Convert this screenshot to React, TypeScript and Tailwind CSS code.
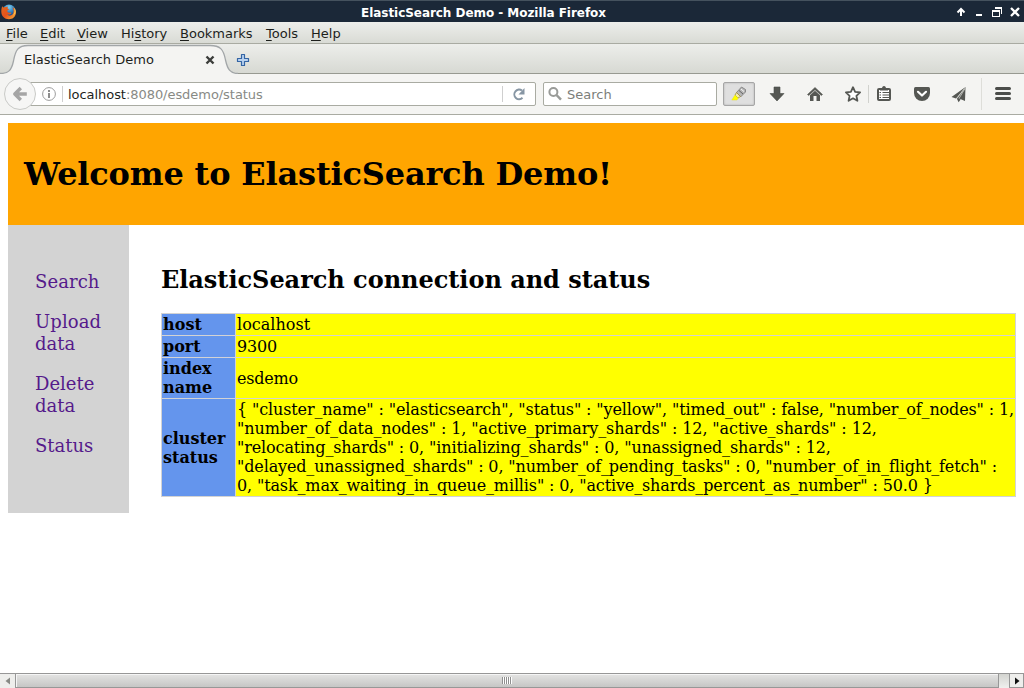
import React from "react";

const menus = [
  { label: "File", key: 0, width: "w-[34px]" },
  { label: "Edit", key: 0, width: "w-[37px]" },
  { label: "View", key: 0, width: "w-[44px]" },
  { label: "History", key: 2, width: "w-[59px]" },
  { label: "Bookmarks", key: 0, width: "w-[86px]" },
  { label: "Tools", key: 0, width: "w-[45px]" },
  { label: "Help", key: 0, width: "w-[40px]" },
];

type Line = { text: string; tracking?: string };

const statusLines: Line[] = [
  { text: '{ "cluster_name" : "elasticsearch", "status" : "yellow", "timed_out" : false, "number_of_nodes" : 1,', tracking: "tracking-[-0.13px]" },
  { text: '"number_of_data_nodes" : 1, "active_primary_shards" : 12, "active_shards" : 12,', tracking: "tracking-[-0.095px]" },
  { text: '"relocating_shards" : 0, "initializing_shards" : 0, "unassigned_shards" : 12,', tracking: "tracking-[-0.13px]" },
  { text: '"delayed_unassigned_shards" : 0, "number_of_pending_tasks" : 0, "number_of_in_flight_fetch" :', tracking: "tracking-[-0.138px]" },
  { text: '0, "task_max_waiting_in_queue_millis" : 0, "active_shards_percent_as_number" : 50.0 }', tracking: "tracking-[-0.137px]" },
];

const rows: { name: Line[]; value: Line[] }[] = [
  { name: [{ text: "host", tracking: "tracking-[0.1px]" }], value: [{ text: "localhost", tracking: "tracking-[0.03px]" }] },
  { name: [{ text: "port" }], value: [{ text: "9300", tracking: "tracking-[-0.18px]" }] },
  { name: [{ text: "index" }, { text: "name" }], value: [{ text: "esdemo", tracking: "tracking-[-0.2px]" }] },
  { name: [{ text: "cluster" }, { text: "status" }], value: statusLines },
];

const links: Line[][] = [
  [{ text: "Search", tracking: "tracking-[0.08px]" }],
  [{ text: "Upload", tracking: "tracking-[0.12px]" }, { text: "data" }],
  [{ text: "Delete" }, { text: "data" }],
  [{ text: "Status" }],
];

function Lines({ lines }: { lines: Line[] }) {
  return (
    <>
      {lines.map(({ text, tracking }) => (
        <span key={text} className={`block whitespace-nowrap ${tracking ?? ""}`}>{text}</span>
      ))}
    </>
  );
}

function FirefoxIcon() {
  return (
    <svg className="ml-px mt-[3px] h-4 w-4 shrink-0 self-start" viewBox="0 0 16 16">
      <defs>
        <radialGradient id="globe" cx=".5" cy=".2" r=".7">
          <stop offset="0" stopColor="#7fd0f0" />
          <stop offset=".6" stopColor="#2a78b8" />
          <stop offset="1" stopColor="#123c78" />
        </radialGradient>
        <linearGradient id="fox" x1="0" y1="0" x2="1" y2="1">
          <stop offset="0" stopColor="#e06a20" />
          <stop offset=".5" stopColor="#e5521c" />
          <stop offset="1" stopColor="#f9b43a" />
        </linearGradient>
      </defs>
      <circle cx="8" cy="7.2" r="6.7" fill="url(#globe)" />
      <path d="M1.2 2.2 2.5 3.5C3.3 3 4.5 2.8 5.5 3.1L6.8 2.4 6.6 4.4 8.2 5.4 6.4 6.6C5.8 8 7.5 9.3 9.4 8.4L10.4 9C9.6 10.6 7.6 11 6.2 10.2 8 12.4 11.5 11.8 12.4 8.8 13 6.6 12.2 4.5 11 3.2 14 4.2 15.4 6.5 14.9 9.5 14.2 13.3 11.3 15.2 8 15.2 3.5 15.2.3 11.8.3 7.7.3 5.7.6 3.7 1.2 2.2Z" fill="url(#fox)" />
      <path d="M12.6 3.4C14 5.4 14 9.5 11.5 11.8 13.8 11.2 15 8.6 14.7 6.7 14.5 5.1 13.5 4 12.6 3.4Z" fill="#fbd04f" />
    </svg>
  );
}

function TitleBar() {
  return (
    <header className="flex h-[22px] border-t border-[#45525e] bg-[#1b2838]">
      <FirefoxIcon />
      <div className="w-[933px] pt-1 text-center text-[12px] font-bold leading-[17px] tracking-[-0.05px] text-white">
        ElasticSearch Demo - Mozilla Firefox
      </div>
      <svg className="-mt-px h-[22px] w-[74px] shrink-0" viewBox="950 0 74 22" fill="none" stroke="#fff" strokeWidth="2">
        <path d="M961 16V9M957.500 12.500 961 9l3.500 3.500" />
        <path d="M976 14h6v2h-6zM992 10h8v7h-8zM993 12v4h6v-4zM995 7h7v7h-1V9h-6z" fill="#fff" fillRule="evenodd" stroke="none" />
        <path d="M1011 8l8 8M1019 8l-8 8" strokeWidth="2.300" />
      </svg>
    </header>
  );
}

function MenuBar() {
  return (
    <nav className="flex h-[22px] border-b border-[#a9aba2] bg-linear-to-b from-[#edeeeb] to-[#d9dbd5] pl-1.5 text-[13px] leading-[23px] text-[#1d1f1c]">
      {menus.map(({ label, key, width }) => (
        <span key={label} className={width}>
          {label.slice(0, key)}
          <span className="underline decoration-1 underline-offset-2">{label[key]}</span>
          {label.slice(key + 1)}
        </span>
      ))}
    </nav>
  );
}

function TabBar() {
  return (
    <div className="flex h-[30px] border-b border-[#979991] bg-linear-to-b from-[#edeeeb] to-[#d7d9d3]">
      <div className="relative h-[30px] w-[238px] shrink-0">
        <svg className="absolute inset-0" width="238" height="30" viewBox="0 0 238 30">
          <path d="M0 29.500C9 29.500 11.500 26 13.500 17 15.500 6 18 1.500 28 1.500H210C220 1.500 223.500 5 225.500 16 227.500 25 230 29.500 238 29.500V30H0Z" fill="#f4f4f2" />
          <path d="M0 29.500C9 29.500 11.500 26 13.500 17 15.500 6 18 1.500 28 1.500H210C220 1.500 223.500 5 225.500 16 227.500 25 230 29.500 238 29.500" fill="none" stroke="#a2a6a8" strokeWidth="1.300" />
        </svg>
        <div className="relative flex items-center pl-6 pt-[6px]">
          <span className="w-[181px] text-[13px] leading-[19px] text-[#1d1f1c]">ElasticSearch Demo</span>
          <svg className="h-2.5 w-2.5" viewBox="0 0 10 10" stroke="#3b3d3b" strokeWidth="2.400">
            <path d="M1.500 1.500l7 7M8.500 1.500l-7 7" />
          </svg>
        </div>
      </div>
      <svg className="ml-[-2px] mt-[9px] h-[14px] w-[14px]" viewBox="0 0 14 14">
        <path d="M5.500 1.500h3v4h4v3h-4v4h-3v-4h-4v-3h4z" fill="#b9d2f0" stroke="#3465a4" strokeWidth="1.200" strokeLinejoin="round" />
      </svg>
    </div>
  );
}

function ToolbarIcons() {
  return (
    <svg className="h-10 w-[269px] shrink-0" viewBox="755 74 269 40" fill="#555753">
      <path d="M774 87h6v6.500h4L777 101l-7-7.500h4z" stroke="#474947" strokeWidth=".6" />
      <path d="M807.500 94.500 815 87.500l7.500 7-1.200 1-6.300-5.800-6.300 5.800z" stroke="#555753" strokeWidth=".6" />
      <path d="M810 95.300 815 90.700l5 4.600v5.700h-3.500v-5h-3v5H810z" />
      <path d="M853 87.200l2.100 4.600 5 .6-3.700 3.400 1 5-4.400-2.500-4.400 2.500 1-5-3.700-3.400 5-.6z" fill="#fff" stroke="#555753" strokeWidth="1.800" strokeLinejoin="round" />
      <path d="M868 85h1v18h-1z" fill="#d1d2ce" />
      <rect x="878" y="89" width="12" height="11" rx="1" fill="#fff" stroke="#555753" strokeWidth="2" />
      <path d="M880 88.500h2c0-1.600.8-2.500 2-2.500s2 .9 2 2.500h2v2h-8z" />
      <path d="M879.500 92.500h1.500M879.500 95h1.500M879.500 97.500h1.500M882.500 92.500h6.500M882.500 95h6.500M882.500 97.500h6.500" stroke="#555753" strokeWidth="1.100" />
      <path d="M915.500 87h13q1.500 0 1.500 1.500v4.500a8 8 0 0 1-16 0v-4.500q0-1.500 1.500-1.500z" />
      <path d="m918 91.800 4 3.700 4-3.700" fill="none" stroke="#fff" strokeWidth="2.200" strokeLinecap="round" strokeLinejoin="round" />
      <path d="M965.500 87 951.500 97l4.500 1.500zM965.500 87 958 98l7 3zM964.500 88.500 956.800 98.500l1.800 3.800 2-2.800-1.600-1z" />
      <path d="M964.500 88.500 957 98.500M965 88.500 959 98.500" stroke="#dcdeda" strokeWidth=".7" />
      <path d="M981 78h1v32h-1z" fill="#deded9" />
      <path d="M996.500 88.500h13M996.500 93.500h13M996.500 98.500h13" stroke="#4b4d4a" strokeWidth="3" strokeLinecap="round" />
    </svg>
  );
}

function Toolbar() {
  return (
    <div className="flex h-[41px] border-b border-[#a9aba2] bg-[#f4f4f2] text-[13px]">
      <div className="relative z-10 ml-1 mt-1 flex h-8 w-8 shrink-0 items-center justify-center rounded-full border border-[#c9cac7] bg-[#f6f6f5]">
        <svg className="h-4 w-4" viewBox="0 0 16 16" fill="none" stroke="#a5a5a5" strokeWidth="3.400" strokeLinejoin="round">
          <path d="M14.800 8H4M8.800 2 2.800 8 8.800 14" />
        </svg>
      </div>
      <div className="-ml-2 mt-2 flex h-6 w-[508px] shrink-0 items-center rounded-[2px] border border-[#a9aba2] bg-white">
        <svg className="ml-[13px] h-[14px] w-[14px]" viewBox="0 0 14 14">
          <circle cx="7" cy="7" r="6.400" fill="none" stroke="#9c9c9c" />
          <path d="M6 3h2v2H6zM6 6h2v5H6z" fill="#8d8d8d" />
        </svg>
        <div className="ml-[6px] h-4 w-px bg-[#cfcfcf]" />
        <div className="ml-[5px] w-[434px] pt-px leading-[23px] tracking-[-0.05px] text-[#888a85]">
          <span className="text-[#1d1f1c]">localhost</span>:8080/esdemo/status
        </div>
        <div className="h-4 w-px bg-[#cfcfcf]" />
        <svg className="ml-[9px] h-[14px] w-[14px]" viewBox="0 0 14 14">
          <path d="M10 3.500A4.800 4.800 0 1 0 10.500 10.800" fill="none" stroke="#8796a4" strokeWidth="2" />
          <path d="M12.500 1v6.500H6.500z" fill="#8796a4" />
        </svg>
      </div>
      <div className="ml-[7px] mt-2 flex h-6 w-[174px] shrink-0 items-center rounded-[2px] border border-[#a9aba2] bg-white text-[#7c7e7a]">
        <svg className="ml-1 h-[14px] w-[14px]" viewBox="0 0 14 14" fill="none" stroke="#999b98">
          <circle cx="5.400" cy="5" r="4" strokeWidth="2" />
          <path d="m8.500 8 4.500 4.700" strokeWidth="2.500" />
        </svg>
        <span className="ml-[5px] pt-px leading-[23px]">Search</span>
      </div>
      <div className="ml-1.5 mt-2 flex h-6 w-8 shrink-0 items-center justify-center rounded-[2px] border border-[#a6a6a6] bg-[#dfdfdf] shadow-[inset_0_0_2px_#aaa]">
        <svg className="h-4 w-4" viewBox="0 0 16 16">
          <path d="M5.500 6.500 10.500 1 14.500 3.500V6L9.500 11z" fill="#b5b5b5" stroke="#777" strokeWidth=".8" />
          <path d="m8 4.500 4 3.500" stroke="#666" />
          <path d="m10 3 3 2.500" stroke="#f8f8f8" />
          <path d="M5.500 6.500 9.500 10.500 7 12 4 9z" fill="#eee8b0" stroke="#9b8a36" strokeWidth=".8" />
          <path d="M4 9 7.200 12.200 6 14H.8z" fill="#ffff00" stroke="#e4df20" strokeWidth=".5" />
        </svg>
      </div>
      <ToolbarIcons />
    </div>
  );
}

function Page() {
  return (
    <main className="h-[558px] overflow-hidden bg-white pl-2 pt-2 font-['DejaVu_Serif',serif] text-black">
      <div className="h-[102px] bg-[#ffa500] pl-4 pt-8">
        <h1 className="text-[32px] font-bold leading-[38px] tracking-[-0.18px]">Welcome to ElasticSearch Demo!</h1>
      </div>
      <div className="flex">
        <aside className="flex h-[288px] w-[121px] shrink-0 flex-col gap-[18px] bg-[#d3d3d3] pl-[27px] pt-[46px] text-[18px] leading-[22px] text-[#551a8b]">
          {links.map((link) => (
            <a key={link[0].text}><Lines lines={link} /></a>
          ))}
        </aside>
        <section className="ml-8 w-[855px] pt-[41px]">
          <h2 className="text-[24px] font-bold leading-7 tracking-[-0.03px]">ElasticSearch connection and status</h2>
          <table className="mt-[19px] w-[855px] table-fixed border-collapse border border-[#d3d3d3] text-[16px] leading-[19px]">
            <colgroup>
              <col className="w-[74px]" />
              <col />
            </colgroup>
            <tbody>
              {rows.map((row) => (
                <tr key={row.name[0].text}>
                  <th className="border border-[#d3d3d3] bg-[#6495ed] p-px text-left align-middle font-bold"><Lines lines={row.name} /></th>
                  <td className="border border-[#d3d3d3] bg-[#ffff00] p-px align-middle"><Lines lines={row.value} /></td>
                </tr>
              ))}
            </tbody>
          </table>
        </section>
      </div>
    </main>
  );
}

function ScrollBar() {
  return (
    <div className="flex h-[15px] border-t border-[#979797] bg-linear-to-b from-[#d3d4d0] to-[#f0f0ee]">
      <div className="flex w-[15px] items-center justify-center bg-[#eeeeec]">
        <svg className="h-2 w-2" viewBox="0 0 8 8"><path d="M6 .5v7L1.500 4z" fill="#888a85" /></svg>
      </div>
      <div className="flex w-[984px] items-center justify-center border-x border-b border-[#979797] bg-linear-to-b from-[#e4e4e3] to-[#c6c6c5] shadow-[inset_1px_1px_0_#f5f5f5]">
        {[0, 1, 2, 3, 4].map((n) => (
          <span key={n} className="h-[7px] w-0.5 border-r border-white bg-[#8f8f8f]" />
        ))}
      </div>
      <div className="w-[10px]" />
      <div className="flex w-[15px] items-center justify-center border border-t-0 border-[#979797] bg-[#eeeeec]">
        <svg className="h-2 w-2" viewBox="0 0 8 8"><path d="M2 .5v7L6.500 4z" fill="#111" /></svg>
      </div>
    </div>
  );
}

export default function App() {
  return (
    <div className="h-[688px] w-[1024px] overflow-hidden font-['DejaVu_Sans',sans-serif]">
      <TitleBar />
      <MenuBar />
      <TabBar />
      <Toolbar />
      <Page />
      <ScrollBar />
    </div>
  );
}
